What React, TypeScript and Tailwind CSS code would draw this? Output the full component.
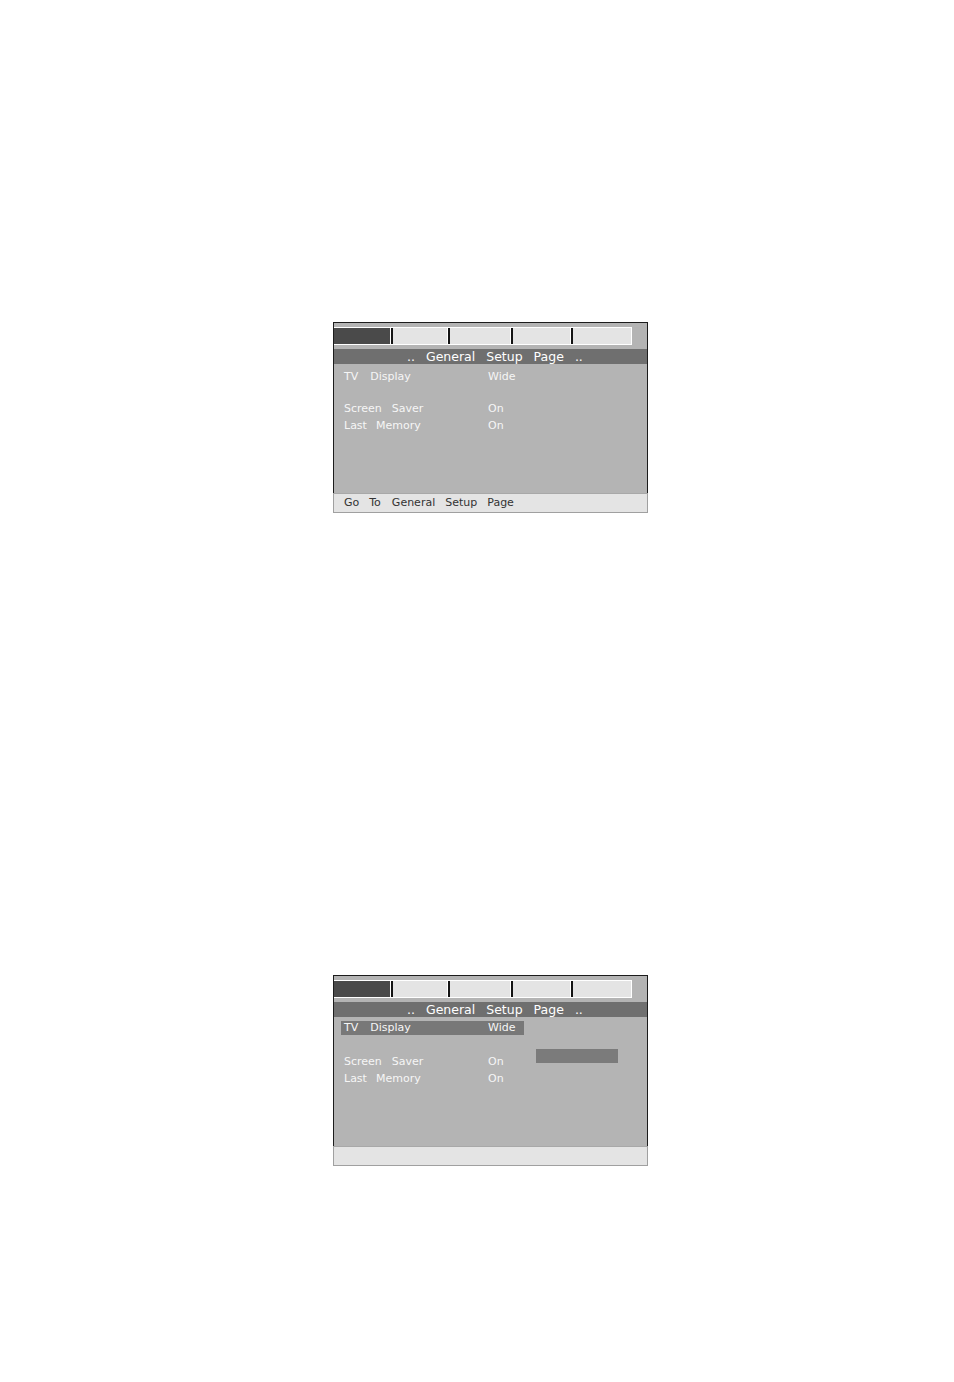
const TABS = [54, 60, 57, 58];

const ROWS = [
  { label: ["TV", "Display"], value: "Wide", gap: "gap-[12px]" },
  { label: ["Screen", "Saver"], value: "On", gap: "gap-[10px]" },
  { label: ["Last", "Memory"], value: "On", gap: "gap-[9px]" },
];

function TabStrip() {
  return (
    <div className="flex h-[18px] w-[298px] border-y border-r border-white">
      <div className="w-[59px] bg-[#4a4a4a]" />
      {TABS.map((w, i) => (
        <div key={i} className="flex">
          <div className="w-px bg-white" />
          <div className="w-[2px] bg-[#141414]" />
          <div className="bg-[#e4e4e4]" style={{ width: w }} />
        </div>
      ))}
    </div>
  );
}

function Row({
  row,
  active,
  className,
}: {
  row: (typeof ROWS)[number];
  active?: boolean;
  className?: string;
}) {
  return (
    <div
      className={`ml-[7px] flex h-[14px] w-[183px] items-center pl-[3px] text-[11px] leading-[14px] text-[#f6f6f6] ${
        active ? "bg-[#787878]" : ""
      } ${className ?? ""}`}
    >
      <div className={`flex w-[144px] ${row.gap}`}>
        {row.label.map((w) => (
          <span key={w}>{w}</span>
        ))}
      </div>
      <span>{row.value}</span>
    </div>
  );
}

function SetupPanel({ selected }: { selected?: boolean }) {
  return (
    <div className="w-[315px] font-['DejaVu_Sans',sans-serif]">
      <div className="flex h-[171px] flex-col border-x border-t border-[#1c1c1c] bg-[#b4b4b4] pt-[4px]">
        <TabStrip />

        <div className="mt-[4px] flex h-[15px] items-center gap-[11px] bg-[#6f6f6f] pl-[73px] text-[12.5px] leading-[15px] text-white">
          <span>..</span>
          <span>General</span>
          <span>Setup</span>
          <span>Page</span>
          <span>..</span>
        </div>

        <div className="flex">
          <div className="flex flex-col">
            <Row
              row={ROWS[0]}
              active={selected}
              className={selected ? "mt-[4px]" : "mt-[6px]"}
            />
            <Row
              row={ROWS[1]}
              className={selected ? "mt-[20px]" : "mt-[18px]"}
            />
            <Row row={ROWS[2]} className="mt-[3px]" />
          </div>
          {selected && (
            <div className="ml-[12px] mt-[32px] h-[14px] w-[82px] bg-[#7b7b7b]" />
          )}
        </div>
      </div>

      <div className="flex h-[20px] items-center gap-[10px] border-x border-b border-t border-x-[#a0a0a0] border-b-[#a0a0a0] border-t-[#a8a8a8] bg-[#e4e4e4] pl-[10px] pt-px text-[11px] text-[#333333]">
        {!selected && (
          <>
            <span>Go</span>
            <span>To</span>
            <span className="ml-[1px]">General</span>
            <span>Setup</span>
            <span>Page</span>
          </>
        )}
      </div>
    </div>
  );
}

export default function App() {
  return (
    <div className="flex h-[1382px] w-[954px] flex-col gap-[462px] bg-white pl-[333px] pt-[322px]">
      <SetupPanel />
      <SetupPanel selected />
    </div>
  );
}
